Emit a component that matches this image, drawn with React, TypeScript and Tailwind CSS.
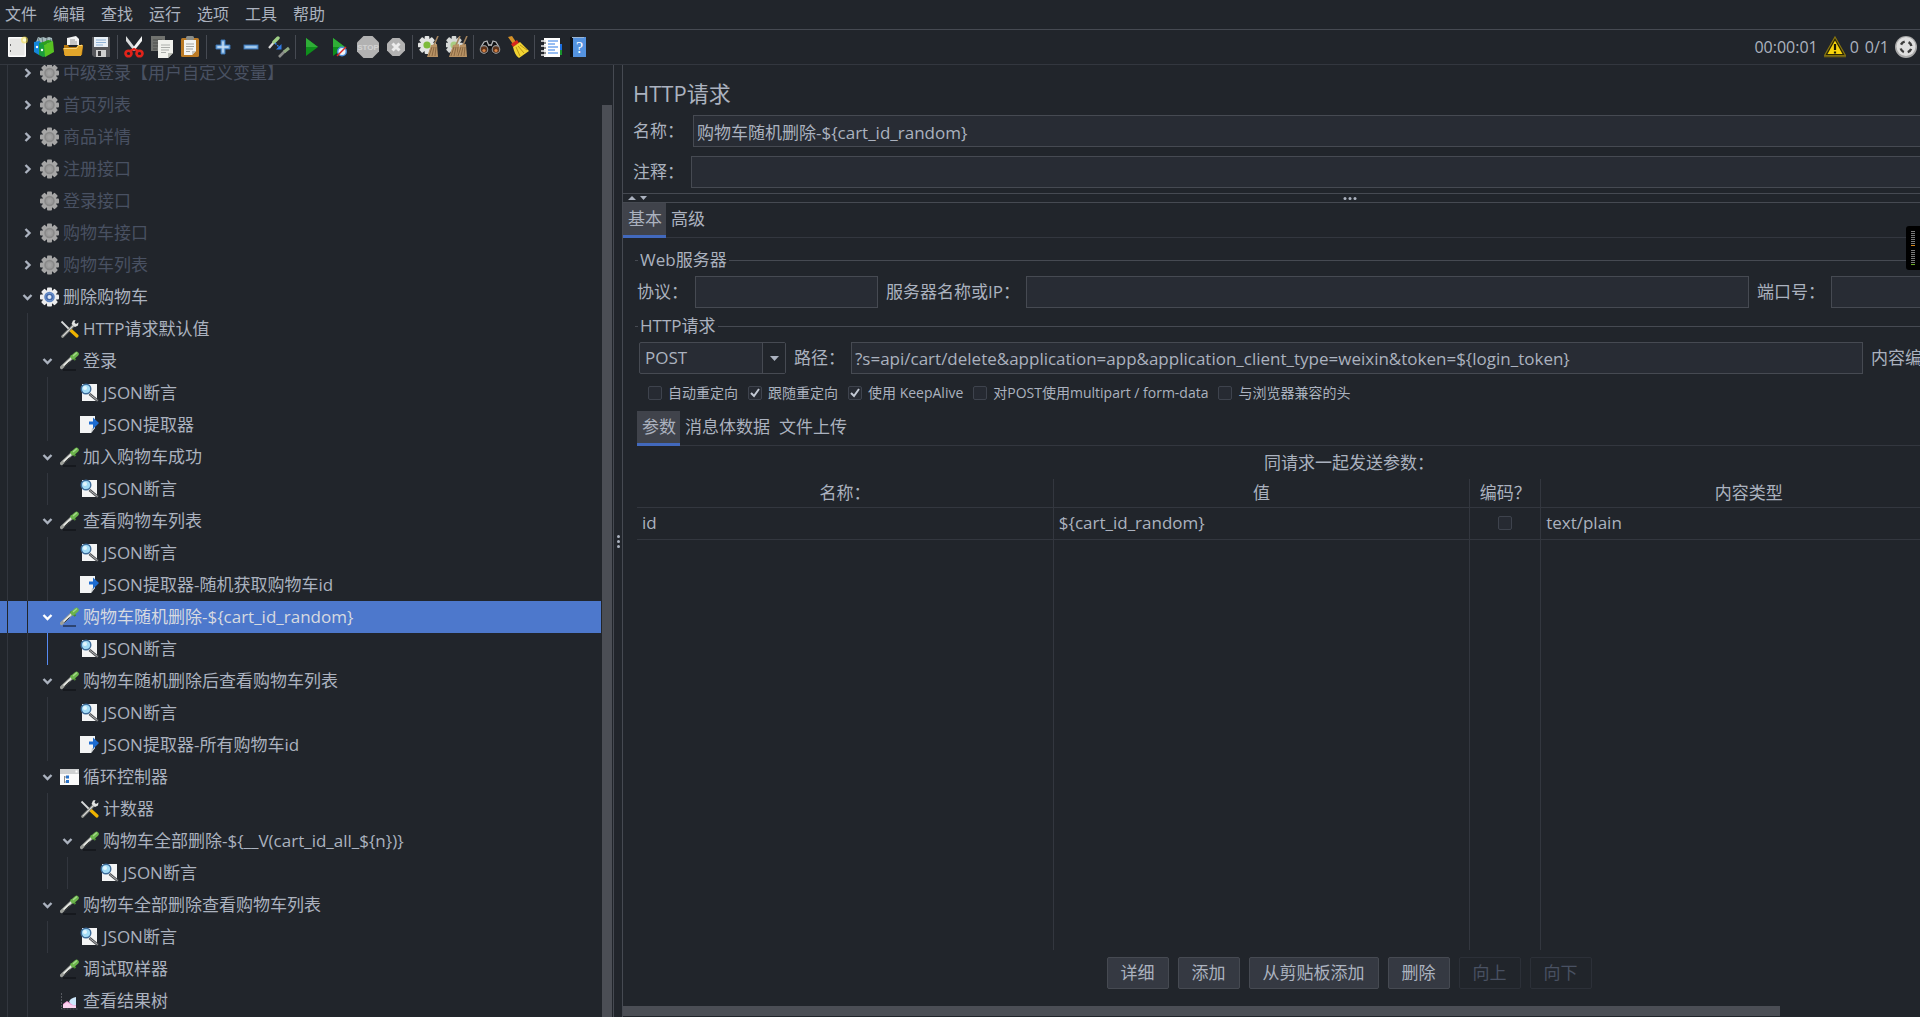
import type { ReactNode } from "react";
import clsx from "clsx";

function Svg({ children, className = "size-[22px]", box = "0 0 22 22" }: { children: ReactNode; className?: string; box?: string }) {
	return (
		<svg viewBox={box} className={clsx("shrink-0", className)} aria-hidden="true">
			{children}
		</svg>
	);
}

/* ---------- toolbar icons ---------- */

function NewIcon() {
	return (
		<Svg>
			<rect x="2" y="1" width="18" height="20" rx="1" fill="#fdfdfc" />
			<rect x="3.500" y="2.500" width="15" height="17" fill="#e6e6e4" />
			<path d="M4.500 8v2M4.500 14v2" stroke="#6b6b6b" />
			<circle cx="18.500" cy="4" r="3.500" fill="#f4e04d" opacity=".6" />
			<circle cx="18.500" cy="4" r="1.800" fill="#fffbd0" />
		</Svg>
	);
}

function TemplatesIcon() {
	return (
		<Svg>
			<path d="M2 6l2-5 3 1 2-1 3 1 3-1 3 1 1 9-9 3z" fill="#a9bcc0" />
			<path d="M4 2l2 5M8 1l1 7M13 2l-1 6M17 3l-2 6" stroke="#6f8488" strokeWidth="1.200" />
			<path d="M0 6l5-1 4 3v10l-4 1-5-3z" fill="#1486d8" />
			<path d="M5 7l5-1 3 3v11l-4 1-4-2z" fill="#1a9c3c" />
			<path d="M10 9l9-4 1 11-9 5z" fill="#58c322" />
			<path d="M10 9l9-4-5-1-7 3z" fill="#2f9e1c" />
			<circle cx="3" cy="11" r="1.200" fill="#fff" />
			<circle cx="8" cy="14" r="1.200" fill="#fff" />
		</Svg>
	);
}

function OpenIcon() {
	return (
		<Svg>
			<path d="M5 9V2l9-2 3 3v6z" fill="#f3f3f3" />
			<path d="M8 4h5M8 6h7M8 8h7" stroke="#9a9a9a" />
			<path d="M2 9h4l1 2h12V8l2 2-1 9H2z" fill="#b8790e" />
			<path d="M1 12h13l2-3h5l-2 11H3z" fill="#e2a62b" />
			<path d="M2 12.500h12.500l2-3H20" stroke="#f9d67c" fill="none" />
		</Svg>
	);
}

function SaveIcon() {
	return (
		<Svg>
			<path d="M2 1h18v20H4l-2-2z" fill="#55565a" />
			<rect x="4" y="1" width="14" height="10" fill="#e9f0f7" />
			<path d="M6 4h10M6 6.500h10M6 9h7" stroke="#8fb2d6" />
			<rect x="6" y="14" width="10" height="7" fill="#cfcfcf" />
			<rect x="8" y="15" width="3" height="5" fill="#3a3a3c" />
		</Svg>
	);
}

function CutIcon() {
	return (
		<Svg>
			<path d="M3 0l10 13-2 2L3 5z" fill="#d9dbdc" />
			<path d="M19 0L9 13l2 2 8-10z" fill="#f3f4f4" />
			<ellipse cx="5.500" cy="17.500" rx="3" ry="2.800" fill="none" stroke="#e2231a" strokeWidth="2.600" />
			<ellipse cx="16.500" cy="17.500" rx="3" ry="2.800" fill="none" stroke="#e2231a" strokeWidth="2.600" />
			<path d="M7 15l4-2 4 2" stroke="#e2231a" strokeWidth="2.400" fill="none" />
		</Svg>
	);
}

function CopyIcon() {
	return (
		<Svg>
			<path d="M0 0h14v15H0z" fill="#70726f" />
			<path d="M2 4h9M2 7h6M2 10h6M2 13h4" stroke="#4c4e4c" />
			<path d="M7 4h15v13l-5 5H7z" fill="#f0f1ec" />
			<path d="M10 9h9M10 11.500h9M10 14h8M10 16.500h5" stroke="#abaeaa" />
			<path d="M17 22v-5h5z" fill="#b9bcb4" />
		</Svg>
	);
}

function PasteIcon() {
	return (
		<Svg>
			<rect x="2" y="2" width="18" height="19" rx="1.500" fill="#bb7a25" />
			<path d="M5 4h12v11l-4 4H5z" fill="#f4f4f2" />
			<rect x="7" y="0" width="8" height="4" rx="1.500" fill="#8b8d88" />
			<path d="M7 8h8M7 10.500h8M7 13h7M7 15.500h4" stroke="#a3a5a2" />
			<path d="M13 19v-4h4z" fill="#c4c5c0" />
		</Svg>
	);
}

function PlusIcon() {
	return (
		<Svg>
			<path d="M9 4h4v5h5v4h-5v5H9v-5H4V9h5z" fill="#79aee0" />
			<path d="M11 5.500v11M5.500 11h11" stroke="#c9e0f5" strokeWidth="1.400" />
			<path d="M9 4h4v5h5v4h-5v5H9v-5H4V9h5z" fill="none" stroke="#3a76b8" strokeWidth=".9" />
		</Svg>
	);
}

function MinusIcon() {
	return (
		<Svg>
			<rect x="4" y="9" width="14" height="4" fill="#79aee0" stroke="#3a76b8" strokeWidth=".9" />
			<path d="M5.500 11h11" stroke="#c9e0f5" />
		</Svg>
	);
}

function ToggleIcon() {
	return (
		<Svg>
			<path d="M1 12L7 5" stroke="#d8d8d8" strokeWidth="2.200" />
			<path d="M6 6l4-4" stroke="#9fcf86" strokeWidth="3.400" strokeLinecap="round" />
			<path d="M11 21l6-6" stroke="#8a8c8a" strokeWidth="2.600" />
			<path d="M16 16l5-4" stroke="#8fa981" strokeWidth="3" />
			<path d="M7 7l5 5" stroke="#2f7ae5" strokeWidth="1.400" strokeDasharray="2 1" />
			<path d="M13.500 8v5.500H8z" fill="#2f7ae5" />
		</Svg>
	);
}

function PlayIcon() {
	return (
		<Svg>
			<path d="M5 2l12 9L5 20z" fill="#0f8f1c" />
			<path d="M5 2l12 9H5z" fill="#2fae37" />
		</Svg>
	);
}

function PlayNoTimersIcon() {
	return (
		<Svg>
			<path d="M4 2l12 9L4 20z" fill="#0f8f1c" />
			<path d="M4 2l12 9H4z" fill="#2fae37" />
			<circle cx="13" cy="15.500" r="5" fill="#4f8fd9" />
			<circle cx="13" cy="15.500" r="3.500" fill="#eef4fb" />
			<path d="M8 20l9-9" stroke="#dd2a22" strokeWidth="1.500" />
		</Svg>
	);
}

function StopIcon() {
	return (
		<Svg>
			<path d="M6.500 0h9L22 6.500v9L15.500 22h-9L0 15.500v-9z" fill="#b2b2b2" />
			<text x="11" y="14" textAnchor="middle" fontSize="8" fontFamily="Liberation Sans, sans-serif" fontWeight="bold" fill="#d2d2d2">
				STOP
			</text>
		</Svg>
	);
}

function ShutdownIcon() {
	return (
		<Svg>
			<path d="M7.500 2h7L20 7.500v7L14.500 20h-7L2 14.500v-7z" fill="#b2b2b2" />
			<path d="M7.500 7.500l7 7M14.500 7.500l-7 7" stroke="#ececec" strokeWidth="3" />
		</Svg>
	);
}

function Cog({ x, y, r, fill, hub }: { x: number; y: number; r: number; fill: string; hub: string }) {
	return (
		<g transform={`translate(${x} ${y}) scale(${r / 10})`}>
			{[0, 45, 90, 135].map((angle) => (
				<rect key={angle} x="-2.600" y="-10" width="5.200" height="20" rx="1" transform={`rotate(${angle})`} fill={fill} />
			))}
			<circle r="7.500" fill={fill} />
			<circle r="4" fill={hub} />
		</g>
	);
}

function Broom({ x }: { x: number }) {
	return (
		<g transform={`translate(${x} 0)`}>
			<path d="M9 0L5 9" stroke="#a2825c" strokeWidth="1.600" />
			<path d="M2 9l6-1 1 13H-2z" fill="#b89264" />
			<path d="M3 11L0 20M5 11l-2 9M7 11l-1 9" stroke="#7c5d3a" strokeWidth=".8" />
		</g>
	);
}

function ClearIcon() {
	return (
		<Svg>
			<Cog x={9} y={9} r={9} fill="#e2e4e2" hub="#7dbb3a" />
			<Broom x={11} />
		</Svg>
	);
}

function ClearAllIcon() {
	return (
		<Svg>
			<Cog x={8} y={9} r={9} fill="#d6d8d6" hub="#a8cd82" />
			<Broom x={5} />
			<Broom x={12} />
		</Svg>
	);
}

function SearchIcon() {
	return (
		<Svg>
			<path d="M4 6l4-2 3 3 3-3 4 2 4 8-3 4h-5l-3-6-3 6H3l-3-4z" fill="#0f1012" />
			<path d="M2 11l3-5 3-1 2 5M20 11l-3-5-3-1-2 5M9 9h4" stroke="#b4b6b9" strokeWidth="1.300" fill="none" />
			<circle cx="5" cy="13.500" r="3.800" fill="#5b3219" stroke="#8f9194" strokeWidth="1.200" />
			<circle cx="17" cy="13.500" r="3.800" fill="#5b3219" stroke="#8f9194" strokeWidth="1.200" />
			<circle cx="5" cy="14.500" r="1.600" fill="#d98445" />
			<circle cx="17" cy="14.500" r="1.600" fill="#d98445" />
		</Svg>
	);
}

function ResetSearchIcon() {
	return (
		<Svg>
			<path d="M1 1l4-1 4 6-3 2z" fill="#d49128" />
			<path d="M4 8l6-4 2 3-6 4z" fill="#d8261c" />
			<path d="M6 11l7-5 9 9-10 7c-3-2-5-6-6-11z" fill="#f2d433" />
			<path d="M9 11l4 9M11 10l6 7M13 9l7 5" stroke="#b4900f" strokeWidth=".9" />
		</Svg>
	);
}

function FunctionIcon() {
	return (
		<Svg>
			<rect x="18" y="8" width="4" height="6" fill="#1b6fe0" />
			<rect x="18" y="14" width="4" height="5" fill="#17942d" />
			<rect x="4" y="2" width="16" height="19" fill="#fff" />
			<path d="M8 5h10M8 8h7M8 11h10M8 14h7M8 17h10" stroke="#2e7ce6" strokeWidth="1.200" />
			<path d="M1 5h5M1 10h5M1 15h5M1 19h5" stroke="#e6e6e6" strokeWidth="1.600" />
			<path d="M3 7h3M3 12h3M3 17h3" stroke="#1a1a1a" />
		</Svg>
	);
}

function HelpIcon() {
	return (
		<Svg>
			<path d="M2 1h5v20H2z" fill="#0f1216" />
			<rect x="5" y="1" width="13" height="20" fill="#5493e0" />
			<path d="M4 1.500h12" stroke="#9db6d3" />
			<text x="11.500" y="16.500" textAnchor="middle" fontSize="16" fontFamily="Liberation Serif, serif" fill="#fff">
				?
			</text>
		</Svg>
	);
}

function WarningIcon() {
	return (
		<Svg>
			<path d="M11 1l10.500 18.500H.5z" fill="#2b2704" stroke="#8a7710" strokeWidth="1.200" />
			<path d="M11 4.500l7.500 13.500h-15z" fill="#f7d40c" />
			<path d="M11 8v6M11 15.500v2" stroke="#1c1a05" strokeWidth="2.200" />
			<path d="M0 20.500h22" stroke="#6d5f14" strokeWidth="1.600" />
		</Svg>
	);
}

function ThreadsIcon() {
	return (
		<Svg>
			<circle cx="11" cy="11" r="11" fill="#a9a9a9" />
			<circle cx="11" cy="10.500" r="9.500" fill="#dedede" />
			<circle cx="11" cy="11" r="5.500" fill="none" stroke="#3a3a3a" strokeWidth="2.400" strokeDasharray="4.600 4.040" strokeDashoffset="-2.020" />
		</Svg>
	);
}

/* ---------- tree icons ---------- */

const treeIconClass = "size-5";

function GearIcon({ muted }: { muted?: boolean }) {
	return (
		<Svg className={treeIconClass} box="0 0 20 20">
			<Cog x={9.5} y={10} r={9.5} fill={muted ? "#a6a6a6" : "#ecedee"} hub={muted ? "#9b9b9b" : "#456aa8"} />
			<circle cx="9.500" cy="10" r="4.400" fill="none" stroke={muted ? "#8a8a8a" : "#5f86c4"} strokeWidth="1.800" />
			<circle cx="9.500" cy="10" r="2" fill={muted ? "#a3a3a3" : "#dfe8f5"} />
		</Svg>
	);
}

function ToolsIcon() {
	return (
		<Svg className={treeIconClass} box="0 0 20 20">
			<path d="M1.500 2.500L11 12" stroke="#d7d9da" strokeWidth="1.800" />
			<path d="M11 11.500l6 5.500" stroke="#f0b400" strokeWidth="3.200" strokeLinecap="round" />
			<path d="M2.500 17.500L14 6" stroke="#9a9c98" strokeWidth="2.600" strokeLinecap="round" />
			<path d="M3 17l10.500-10.500" stroke="#dcdddb" strokeWidth=".9" />
			<path d="M13 1.500l-1.500 3.500 3.500 3 3-1.500.5-3-2.500 1.500-1.500-1.500 1-2.500z" fill="#e2e3e1" />
		</Svg>
	);
}

function SamplerIcon() {
	return (
		<Svg className={treeIconClass} box="0 0 20 20">
			<path d="M3 19h13" stroke="#0d0f12" strokeWidth="1.600" opacity=".6" />
			<path d="M1.500 16.500L11.500 7" stroke="#9da09b" strokeWidth="3.200" strokeLinecap="round" />
			<path d="M3.500 14.500L11.500 7" stroke="#eceeea" strokeWidth="1.500" />
			<path d="M4.500 15.500l5-5" stroke="#3d403c" strokeWidth="1" />
			<path d="M10.500 4.500l5 4.500" stroke="#468b2f" strokeWidth="2.200" />
			<path d="M13 6l3.500-3" stroke="#6cb44c" strokeWidth="4.600" strokeLinecap="round" />
			<path d="M13.500 4.500l3-2.500" stroke="#a5d98b" strokeWidth="1.400" strokeLinecap="round" />
		</Svg>
	);
}

function AssertionIcon() {
	return (
		<Svg className={treeIconClass} box="0 0 20 20">
			<path d="M2 1h15v17H2z" fill="#f4f5f5" />
			<path d="M9.500 11l8.500 7" stroke="#4d4f52" strokeWidth="2.800" />
			<path d="M10 11.500l7.500 6" stroke="#b9bbbd" strokeWidth=".9" />
			<circle cx="6" cy="6" r="4.800" fill="#a3dcf6" stroke="#3e6c9a" strokeWidth="1.400" />
			<circle cx="5" cy="5" r="2" fill="#e2f5fd" />
		</Svg>
	);
}

function ExtractorIcon() {
	return (
		<Svg className={treeIconClass} box="0 0 20 20">
			<path d="M0 1h15v12l-4 5H0z" fill="#f3f4f4" />
			<path d="M11 18l1-5h3z" fill="#c3c6c9" />
			<path d="M9 8h5" stroke="#1c6bd0" strokeWidth="3" />
			<path d="M13 2.500L19 8l-6 6z" fill="#1c6bd0" />
		</Svg>
	);
}

function LoopIcon() {
	return (
		<Svg className={treeIconClass} box="0 0 20 20">
			<rect x="0" y="2" width="19" height="16" fill="#fbfbfb" />
			<rect x="0" y="2" width="19" height="5" fill="#cfd1d2" />
			<path d="M4.500 9v7M4.500 10h3M4.500 15h3" stroke="#8a8c8e" fill="none" />
			<rect x="6" y="8.500" width="3" height="3" fill="#2b74c9" />
			<rect x="6" y="13" width="3" height="3" fill="#2b74c9" />
			<path d="M15.500 4.500h2" stroke="#fff" strokeWidth="2" />
		</Svg>
	);
}

function ResultsIcon() {
	return (
		<Svg className={treeIconClass} box="0 0 20 20">
			<path d="M1.500 2v16h16" stroke="#56595f" strokeDasharray="2 1" fill="none" />
			<path d="M3 17v-4l4-3 3 2 6-3v8z" fill="#f19ad6" />
			<path d="M9 11c1-3 3-4 7-5v8c-2 1-4 0-7-3z" fill="#cde7fb" />
			<path d="M3 14l4-3 4 3 5 1v2H3z" fill="#fbd3ef" />
		</Svg>
	);
}

/* ---------- tree ---------- */

type NodeKind = "gearMuted" | "gear" | "tools" | "sampler" | "assertion" | "extractor" | "loop" | "results";

const nodeIcons: Record<NodeKind, ReactNode> = {
	gearMuted: <GearIcon muted />,
	gear: <GearIcon />,
	tools: <ToolsIcon />,
	sampler: <SamplerIcon />,
	assertion: <AssertionIcon />,
	extractor: <ExtractorIcon />,
	loop: <LoopIcon />,
	results: <ResultsIcon />,
};

type TreeNode = {
	depth: number;
	kind: NodeKind;
	label: string;
	toggle?: "open" | "closed";
	selected?: boolean;
	underSelected?: boolean;
};

const nodes: TreeNode[] = [
	{ depth: 1, kind: "gearMuted", label: "中级登录【用户自定义变量】", toggle: "closed" },
	{ depth: 1, kind: "gearMuted", label: "首页列表", toggle: "closed" },
	{ depth: 1, kind: "gearMuted", label: "商品详情", toggle: "closed" },
	{ depth: 1, kind: "gearMuted", label: "注册接口", toggle: "closed" },
	{ depth: 1, kind: "gearMuted", label: "登录接口" },
	{ depth: 1, kind: "gearMuted", label: "购物车接口", toggle: "closed" },
	{ depth: 1, kind: "gearMuted", label: "购物车列表", toggle: "closed" },
	{ depth: 1, kind: "gear", label: "删除购物车", toggle: "open" },
	{ depth: 2, kind: "tools", label: "HTTP请求默认值" },
	{ depth: 2, kind: "sampler", label: "登录", toggle: "open" },
	{ depth: 3, kind: "assertion", label: "JSON断言" },
	{ depth: 3, kind: "extractor", label: "JSON提取器" },
	{ depth: 2, kind: "sampler", label: "加入购物车成功", toggle: "open" },
	{ depth: 3, kind: "assertion", label: "JSON断言" },
	{ depth: 2, kind: "sampler", label: "查看购物车列表", toggle: "open" },
	{ depth: 3, kind: "assertion", label: "JSON断言" },
	{ depth: 3, kind: "extractor", label: "JSON提取器-随机获取购物车id" },
	{ depth: 2, kind: "sampler", label: "购物车随机删除-${cart_id_random}", toggle: "open", selected: true },
	{ depth: 3, kind: "assertion", label: "JSON断言", underSelected: true },
	{ depth: 2, kind: "sampler", label: "购物车随机删除后查看购物车列表", toggle: "open" },
	{ depth: 3, kind: "assertion", label: "JSON断言" },
	{ depth: 3, kind: "extractor", label: "JSON提取器-所有购物车id" },
	{ depth: 2, kind: "loop", label: "循环控制器", toggle: "open" },
	{ depth: 3, kind: "tools", label: "计数器" },
	{ depth: 3, kind: "sampler", label: "购物车全部删除-${__V(cart_id_all_${n})}", toggle: "open" },
	{ depth: 4, kind: "assertion", label: "JSON断言" },
	{ depth: 2, kind: "sampler", label: "购物车全部删除查看购物车列表", toggle: "open" },
	{ depth: 3, kind: "assertion", label: "JSON断言" },
	{ depth: 2, kind: "sampler", label: "调试取样器" },
	{ depth: 2, kind: "results", label: "查看结果树" },
];

function Chevron({ open }: { open: boolean }) {
	return (
		<svg viewBox="0 0 15 15" className="size-[15px]" fill="none" stroke="currentColor" strokeWidth="2.400" aria-hidden="true">
			<path d={open ? "M3.500 5l4 4 4-4" : "M5.500 3l4 4-4 4"} />
		</svg>
	);
}

function TreeRow({ node }: { node: TreeNode }) {
	const muted = node.kind === "gearMuted";

	return (
		<li
			role="treeitem"
			aria-level={node.depth}
			aria-selected={!!node.selected}
			className={clsx("flex h-8 items-center whitespace-nowrap", node.selected && "bg-[#4d78cc]")}
		>
			{Array.from({ length: node.depth }, (_, level) => (
				<span key={level} className="flex h-full w-5 shrink-0 pl-[7px]">
					<span
						className={clsx(
							"w-px",
							node.selected ? "bg-[#21252b]" : node.underSelected && level === 2 ? "bg-[#568af2]" : "bg-[#32363e]",
						)}
					/>
				</span>
			))}
			<span className="flex w-5 shrink-0">
				{node.toggle && (
					<button
						type="button"
						aria-label={node.label}
						aria-expanded={node.toggle === "open"}
						className={node.selected ? "text-white" : "text-[#abb2bf]"}
					>
						<Chevron open={node.toggle === "open"} />
					</button>
				)}
			</span>
			{nodeIcons[node.kind]}
			<span className={clsx("pl-[3px]", muted ? "text-[#495162]" : node.selected ? "text-[#d7dae0]" : "text-[#abb2bf]")}>{node.label}</span>
		</li>
	);
}

function TestPlanTree() {
	return (
		<aside className="flex w-[614px] shrink-0 overflow-hidden border-r border-[#464a52]">
			<ul role="tree" aria-label="测试计划" className="-mt-2 grow">
				{nodes.map((node, index) => (
					<TreeRow key={index} node={node} />
				))}
			</ul>
			<div className="flex w-3 flex-col pr-px pt-10">
				<div className="ml-px grow bg-[#4b4e55]" />
			</div>
		</aside>
	);
}

/* ---------- menu and toolbar ---------- */

const menus = ["文件", "编辑", "查找", "运行", "选项", "工具", "帮助"];

const toolGroups: { label: string; icon: ReactNode }[][] = [
	[
		{ label: "新建", icon: <NewIcon /> },
		{ label: "模板", icon: <TemplatesIcon /> },
		{ label: "打开", icon: <OpenIcon /> },
		{ label: "保存", icon: <SaveIcon /> },
	],
	[
		{ label: "剪切", icon: <CutIcon /> },
		{ label: "复制", icon: <CopyIcon /> },
		{ label: "粘贴", icon: <PasteIcon /> },
	],
	[
		{ label: "展开", icon: <PlusIcon /> },
		{ label: "折叠", icon: <MinusIcon /> },
		{ label: "切换", icon: <ToggleIcon /> },
	],
	[
		{ label: "启动", icon: <PlayIcon /> },
		{ label: "不停顿开始", icon: <PlayNoTimersIcon /> },
		{ label: "停止", icon: <StopIcon /> },
		{ label: "关闭", icon: <ShutdownIcon /> },
	],
	[
		{ label: "清除", icon: <ClearIcon /> },
		{ label: "清除全部", icon: <ClearAllIcon /> },
	],
	[
		{ label: "查找", icon: <SearchIcon /> },
		{ label: "重置搜索", icon: <ResetSearchIcon /> },
	],
	[
		{ label: "函数助手", icon: <FunctionIcon /> },
		{ label: "帮助", icon: <HelpIcon /> },
	],
];

function MenuBar() {
	return (
		<nav className="flex h-[30px] shrink-0 items-center gap-4 border-b border-[#464a52] pb-0.5 pl-[5px] text-base">
			{menus.map((menu) => (
				<button key={menu} type="button">
					{menu}
				</button>
			))}
		</nav>
	);
}

function Toolbar() {
	return (
		<div className="flex h-[35px] shrink-0 items-center border-b border-[#33373f] pl-[3px]">
			{toolGroups.map((group, index) => (
				<div key={index} className="flex items-center">
					{index > 0 && <span className="mx-0.5 h-6 w-px bg-[#464a52]" />}
					{group.map((tool) => (
						<button key={tool.label} type="button" aria-label={tool.label} className="flex w-7 justify-center">
							{tool.icon}
						</button>
					))}
				</div>
			))}
			<div className="ml-auto flex items-center gap-1.5 pr-[3px] text-base">
				<span>00:00:01</span>
				<span className="flex items-center gap-1">
					<WarningIcon />0
				</span>
				<span>0/1</span>
				<ThreadsIcon />
			</div>
		</div>
	);
}

/* ---------- request editor ---------- */

const fieldClass = "h-8 border border-[#464a52] bg-[#282c34] px-[3px] outline-none";

function TextField({ id, label, value, labelClass, fieldWidth }: { id: string; label: string; value?: string; labelClass?: string; fieldWidth: string }) {
	return (
		<>
			<label htmlFor={id} className={clsx("shrink-0 whitespace-nowrap", labelClass)}>
				{label}
			</label>
			<input id={id} type="text" defaultValue={value} className={clsx(fieldClass, fieldWidth)} />
		</>
	);
}

function CheckBox({ label, checked, hideLabel }: { label: string; checked?: boolean; hideLabel?: boolean }) {
	return (
		<label className="flex items-center gap-1.5 whitespace-nowrap text-sm">
			<span className="relative flex">
				<input
					type="checkbox"
					defaultChecked={checked}
					aria-label={hideLabel ? label : undefined}
					className="peer size-3.5 appearance-none rounded-[2px] border border-[#3e434d] bg-[#262a32]"
				/>
				<svg viewBox="0 0 14 14" className="pointer-events-none absolute inset-0 hidden size-3.5 peer-checked:block" fill="none" stroke="#c3c9d4" strokeWidth="2" aria-hidden="true">
					<path d="M3 7l3 3 5-7" />
				</svg>
			</span>
			{!hideLabel && label}
		</label>
	);
}

function Tabs({ items }: { items: string[] }) {
	return (
		<div role="tablist" className="flex h-[35px] shrink-0 border-b border-[#33373f]">
			{items.map((item, index) => (
				<button
					key={item}
					type="button"
					role="tab"
					aria-selected={index === 0}
					className={clsx("-mb-px border-b-[3px] pl-[5px] pr-1", index === 0 ? "border-[#4269bd] bg-[#40434b]" : "border-transparent")}
				>
					{item}
				</button>
			))}
		</div>
	);
}

function GroupTitle({ title }: { title: string }) {
	return (
		<div className="flex h-6 items-center gap-0.5">
			<span className="h-px w-[3px] bg-[#464a52]" />
			<span>{title}</span>
			<span className="h-px grow bg-[#464a52]" />
		</div>
	);
}

function ParameterTable() {
	const line = "border-[#33373f]";

	return (
		<table className="h-full w-full table-fixed border-collapse">
			<colgroup>
				<col />
				<col />
				<col className="w-[71px]" />
				<col />
				<col className="w-[104px]" />
			</colgroup>
			<thead>
				<tr className={clsx("h-7 border-b", line)}>
					{["名称：", "值", "编码？", "内容类型"].map((title) => (
						<th key={title} className={clsx("border-r font-normal", line)}>
							{title}
						</th>
					))}
					<td />
				</tr>
			</thead>
			<tbody>
				<tr className={clsx("h-8 border-b", line)}>
					<td className={clsx("border-r px-[5px]", line)}>id</td>
					<td className={clsx("border-r px-[5px]", line)}>{"${cart_id_random}"}</td>
					<td className={clsx("border-r", line)}>
						<div className="flex justify-center">
							<CheckBox label="编码" hideLabel />
						</div>
					</td>
					<td className={clsx("border-r px-[5px]", line)}>text/plain</td>
					<td />
				</tr>
				<tr>
					<td className={clsx("border-r", line)} />
					<td className={clsx("border-r", line)} />
					<td className={clsx("border-r", line)} />
					<td className={clsx("border-r", line)} />
					<td />
				</tr>
			</tbody>
		</table>
	);
}

const actions = [
	{ label: "详细" },
	{ label: "添加" },
	{ label: "从剪贴板添加" },
	{ label: "删除" },
	{ label: "向上", disabled: true },
	{ label: "向下", disabled: true },
];

function RequestEditor() {
	return (
		<main className="flex min-w-0 grow flex-col overflow-hidden border-l border-[#464a52]">
			{/* the form is wider than its pane and scrolls sideways */}
			<div className="flex min-h-0 w-[calc(100%+156px)] grow flex-col">
				<h1 className="pl-2.5 pt-3 text-[22px] leading-8">HTTP请求</h1>
				<div className="mt-1.5 flex items-center pl-2.5">
					<TextField id="name" label="名称：" value="购物车随机删除-${cart_id_random}" labelClass="w-[60px]" fieldWidth="grow" />
				</div>
				<div className="mt-[9px] flex items-center pl-2.5">
					<TextField id="comment" label="注释：" labelClass="w-[58px]" fieldWidth="grow" />
				</div>
				<div className="relative mt-[5px] flex h-2.5 items-center border-y border-[#464a52] pl-[5px]">
					<svg viewBox="0 0 20 6" className="h-1.5 w-5" fill="#abb2bf" aria-hidden="true">
						<path d="M0 5l4-4 4 4zM12 1h7l-3.500 4z" />
					</svg>
					<span className="absolute left-1/2 flex -translate-x-1/2 gap-0.5">
						<i className="size-[3px] rounded-full bg-[#abb2bf]" />
						<i className="size-[3px] rounded-full bg-[#abb2bf]" />
						<i className="size-[3px] rounded-full bg-[#abb2bf]" />
					</span>
				</div>
				<Tabs items={["基本", "高级"]} />

				<div className="flex min-h-0 grow flex-col pl-3 pr-[15px] pt-2.5">
					<GroupTitle title="Web服务器" />
					<div className="mt-1 flex items-center gap-2 pl-0.5">
						<TextField id="protocol" label="协议：" labelClass="w-[50px]" fieldWidth="w-[183px]" />
						<TextField id="server" label="服务器名称或IP：" labelClass="w-[132px]" fieldWidth="grow" />
						<TextField id="port" label="端口号：" labelClass="w-[66px]" fieldWidth="w-[230px]" />
					</div>

					<div className="mt-1.5">
						<GroupTitle title="HTTP请求" />
					</div>
					<div className="mt-1 flex items-center gap-2 pl-1">
						<span className="relative flex">
							<select aria-label="方法" className="h-8 w-[147px] appearance-none rounded-[2px] border border-[#464a52] bg-[#282c34] pl-[5px]">
								<option>POST</option>
							</select>
							<span className="pointer-events-none absolute inset-y-px right-px flex w-[23px] items-center justify-center border-l border-[#464a52] bg-[#21252b]">
								<svg viewBox="0 0 9 5" className="h-[5px] w-[9px]" fill="#abb2bf" aria-hidden="true">
									<path d="M0 0h9L4.500 5z" />
								</svg>
							</span>
						</span>
						<TextField id="path" label="路径：" value="?s=api/cart/delete&application=app&application_client_type=weixin&token=${login_token}" labelClass="w-[49px]" fieldWidth="grow" />
						<TextField id="encoding" label="内容编码：" labelClass="w-[87px]" fieldWidth="w-[95px]" />
					</div>
					<div className="mt-2 flex h-[22px] items-center gap-2.5 pl-[13px]">
						<CheckBox label="自动重定向" />
						<CheckBox label="跟随重定向" checked />
						<CheckBox label="使用 KeepAlive" checked />
						<CheckBox label="对POST使用multipart / form-data" />
						<CheckBox label="与浏览器兼容的头" />
					</div>

					<div className="mt-[7px] flex min-h-0 grow flex-col pl-0.5">
						<Tabs items={["参数", "消息体数据", "文件上传"]} />
						<p className="mt-[5px] text-center">同请求一起发送参数：</p>
						<div className="mt-1 min-h-0 grow">
							<ParameterTable />
						</div>
						<div className="mb-[17px] mt-[7px] flex justify-center gap-[9px]">
							{actions.map((action) => (
								<button
									key={action.label}
									type="button"
									disabled={action.disabled}
									className={clsx(
										"h-8 rounded-[2px] border px-[13px]",
										action.disabled ? "border-[#2c3038] text-[#495162]" : "border-[#464a52] bg-[#353942]",
									)}
								>
									{action.label}
								</button>
							))}
						</div>
					</div>
				</div>
			</div>
			<div className="h-[11px] shrink-0 pb-px">
				<div className="h-full w-[89.2%] bg-[#4b4e55]" />
			</div>
		</main>
	);
}

function MeterBars({ last }: { last: string }) {
	return (
		<span className="flex flex-col gap-px">
			{Array.from({ length: 7 }, (_, index) => (
				<i key={index} className="h-px w-1 bg-[#7c7c7c]" />
			))}
			<i className={clsx("h-px w-1", last)} />
		</span>
	);
}

export default function App() {
	return (
		<div className="relative flex h-screen flex-col overflow-hidden bg-[#21252b] font-['Open_Sans','Noto_Sans_CJK_SC',sans-serif] text-[17px] leading-6 text-[#abb2bf]">
			<MenuBar />
			<Toolbar />
			<div className="flex min-h-0 grow">
				<TestPlanTree />
				<div className="flex w-2 shrink-0 flex-col items-center justify-center gap-0.5">
					<i className="size-[3px] rounded-full bg-[#abb2bf]" />
					<i className="size-[3px] rounded-full bg-[#abb2bf]" />
					<i className="size-[3px] rounded-full bg-[#abb2bf]" />
				</div>
				<RequestEditor />
			</div>
			<div className="absolute right-0 top-[226px] flex h-11 w-3.5 flex-col items-center justify-center gap-1 rounded-l-[3px] bg-black">
				<MeterBars last="bg-[#d98a1e]" />
				<MeterBars last="bg-[#6fae2a]" />
			</div>
		</div>
	);
}
